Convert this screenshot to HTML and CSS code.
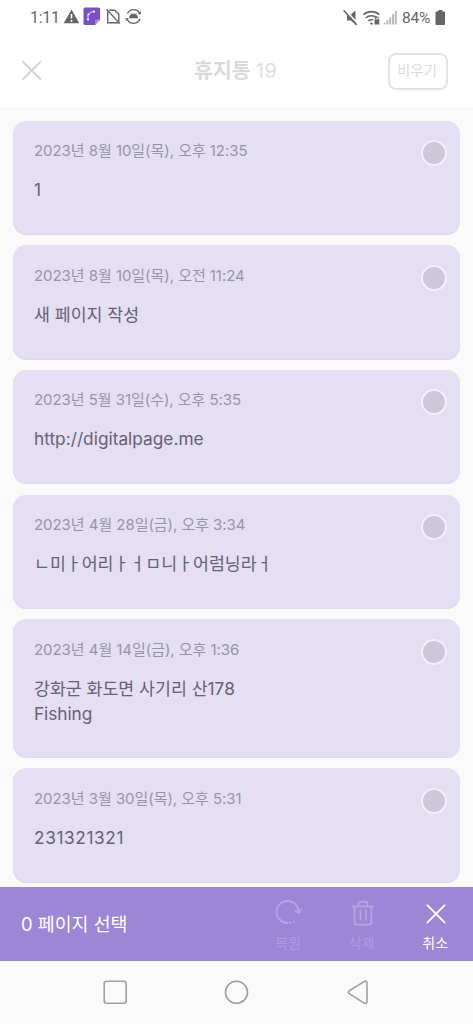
FILE: index.html
```html
<!DOCTYPE html>
<html lang="ko">
<head>
<meta charset="utf-8">
<meta name="viewport" content="width=device-width, initial-scale=1">
<title>휴지통</title>
<link rel="stylesheet" href="styles.css">
</head>
<body>
<div class="screen">
  <div class="status">
    <span class="clock">1:11</span>
    <svg class="status-left" width="80" height="20" viewBox="0 0 80 20">
      <path d="M8.5 2.600 16.300 16.200H.7Z" fill="#666"/>
      <path d="M8.500 7v4.600M8.500 13v1.700" stroke="#fff" stroke-width="1.600"/>
      <path d="M22 .5h13.600a1.500 1.500 0 0 1 1.500 1.500v10.500L32 17.900H22A1.500 1.500 0 0 1 20.500 16.400V2A1.500 1.500 0 0 1 22 .5Z" fill="#7851c3"/>
      <path d="M32 17.900v-3.900a1.500 1.500 0 0 1 1.500-1.500h3.600Z" fill="#a88bdd"/>
      <path d="M25 13V8.500L27 5.500l4-1" fill="none" stroke="#e6dcf6" stroke-width="1"/>
      <circle cx="25" cy="12.500" r="1.100" fill="#fff"/><circle cx="25.500" cy="7.500" r="1.100" fill="#fff"/><circle cx="31" cy="4.600" r="1.100" fill="#fff"/>
      <path d="M46.500 3.200h5.200l4.100 4.200v8.300H44.700V4.500M43.600 2.200 56.800 16.600" fill="none" stroke="#666" stroke-width="1.400"/>
      <path d="M64.400 6.500A7 7 0 0 1 76.500 5.800M77 11.800A7 7 0 0 1 64.200 12.500" fill="none" stroke="#666" stroke-width="1.400"/>
      <path d="M77.900 4v3.200h-3.200ZM62.800 14.200v-3.300h3.300Z" fill="#666"/>
      <path d="M66.500 11a4.100 4 0 0 1 8.200 0ZM67.600 6.200l1.200 1.600M73.600 6.200l-1.200 1.600" fill="#666" stroke="#666" stroke-width=".6"/>
    </svg>
    <svg class="status-right" width="60" height="20" viewBox="0 0 60 20">
      <path d="M5 7.600h2.700L13.500 2.500v14L8.800 12.500H5Z" fill="#666"/>
      <path d="M2.600 1 15.500 15.700" stroke="#fff" stroke-width="1.800"/>
      <path d="M1.600 2.300 14.900 16.900" stroke="#666" stroke-width="1.500"/>
      <path d="M21.400 6.700a12 12 0 0 1 16 0M23.700 10a8.500 8.500 0 0 1 11.400 0M26.300 13a5 5 0 0 1 4.500-1.100" fill="none" stroke="#666" stroke-width="1.600"/>
      <circle cx="29.500" cy="15.600" r="1.200" fill="#666"/>
      <path d="M32.500 11.300h4.800v5.200h-4.800Z" fill="#666"/>
      <path d="M33.400 11.500v-1.200a1.500 1.500 0 0 1 3 0v1.200" fill="none" stroke="#666" stroke-width="1"/>
      <path d="M42.600 16.500v-2M45.400 16.500v-4.600M48.200 16.500V9.300M51 16.500V6.300M53.800 16.500V3" stroke="#b8b8b8" stroke-width="1.900"/>
    </svg>
    <span class="percent">84%</span>
    <svg class="battery" width="11" height="16" viewBox="0 0 11 16">
      <path d="M3.300 0h4v1.400h1.900a.8.8 0 0 1 .8.800v12a.8.8 0 0 1-.8.800H1.300a.8.8 0 0 1-.8-.8v-12a.8.8 0 0 1 .8-.8h2Z" fill="#666"/>
    </svg>
  </div>
  <header class="header">
    <svg width="20" height="20" viewBox="0 0 20 20"><path d="M1.200 1l17 17M18.200 1l-17 17" stroke="#d2d2d2" stroke-width="1.800" stroke-linecap="round"/></svg>
    <h1 class="title">휴지통 <span class="count">19</span></h1>
    <button class="empty">비우기</button>
  </header>
  <main class="list">
    <article class="card"><div><div class="date">2023년 8월 10일(목), 오후 12:35</div><div class="text">1</div></div><span class="check"></span></article>
    <article class="card"><div><div class="date">2023년 8월 10일(목), 오전 11:24</div><div class="text">새 페이지 작성</div></div><span class="check"></span></article>
    <article class="card"><div><div class="date">2023년 5월 31일(수), 오후 5:35</div><div class="text">http://digitalpage.me</div></div><span class="check"></span></article>
    <article class="card"><div><div class="date">2023년 4월 28일(금), 오후 3:34</div><div class="text">ㄴ미ㅏ어리ㅏㅓㅁ니ㅏ어럼닝라ㅓ</div></div><span class="check"></span></article>
    <article class="card"><div><div class="date">2023년 4월 14일(금), 오후 1:36</div><div class="text">강화군 화도면 사기리 산178<br><span class="latin">Fishing</span></div></div><span class="check"></span></article>
    <article class="card"><div><div class="date">2023년 3월 30일(목), 오후 5:31</div><div class="text number">231321321</div></div><span class="check"></span></article>
  </main>
  <footer class="actions">
    <span class="selected">0 페이지 선택</span>
    <div class="action disabled">
      <svg width="30" height="28" viewBox="0 0 30 28" fill="none" stroke="#b9a2e2" stroke-width="1.800" stroke-linecap="round" stroke-linejoin="round"><path d="M14.600 24A11 11 0 1 1 25.600 13.200M22.200 12l3.700 2 2.500-3.600"/><path d="M17.300 23.900h.1M20.800 22.500h.1" stroke-width="2.200"/></svg>
      <span>복원</span>
    </div>
    <div class="action disabled">
      <svg width="30" height="28" viewBox="0 0 30 28" fill="none" stroke="#b9a2e2" stroke-width="1.900" stroke-linecap="round" stroke-linejoin="round"><path d="M5.500 7.500h20.800M11.500 7V3.700q0-1 1-1h6.800q1 0 1 1V7M7.500 8v14.700q0 3 3 3h10.800q3 0 3-3V8M13.500 11.500v9M18.800 11.500v9"/></svg>
      <span>삭제</span>
    </div>
    <div class="action">
      <svg width="30" height="28" viewBox="0 0 30 28"><path d="M7.500 6.400l17 17M24.500 6.400l-17 17" stroke="#fff" stroke-width="2" stroke-linecap="round"/></svg>
      <span>취소</span>
    </div>
  </footer>
  <nav class="nav">
    <svg width="26" height="26" viewBox="0 0 26 26"><rect x="2.200" y="2.300" width="22" height="22" rx="2.500"/></svg>
    <svg width="26" height="26" viewBox="0 0 26 26"><circle cx="12.500" cy="13.300" r="11"/></svg>
    <svg width="26" height="26" viewBox="0 0 26 26"><path d="M4.300 11.800 18.600 2.900Q22 1 22 4v18.400q0 3-3.400 1.400L4.300 14.600q-1.800-1.400 0-2.800Z"/></svg>
  </nav>
</div>
</body>
</html>
```
FILE: styles.css
```css
* { box-sizing: border-box; }
body {
  margin: 0;
  font-family: Inter, "Noto Sans CJK KR", sans-serif;
  background: #fafafa;
}
svg { display: block; flex: none; }
.screen {
  width: 473px;
  height: 1024px;
  display: flex;
  flex-direction: column;
  overflow: hidden;
}
.status {
  flex: none;
  height: 35px;
  padding: 0 27px 0 30px;
  display: flex;
  align-items: center;
  background: #fff;
  color: #666;
  font: 16px/20px Roboto, sans-serif;
}
.clock { width: 33px; margin-top: 1px; letter-spacing: -.3px; }
.status-left { margin-top: -1px; margin-left: 0; }
.status-right { margin-left: auto; }
.percent { width: 32px; font-size: 15.500px; letter-spacing: -.2px; white-space: nowrap; }
.battery { margin-left: 1px; }
.header {
  flex: none;
  height: 72px;
  padding: 0 25px 0 22px;
  display: grid;
  grid-template-columns: 60px 1fr 60px;
  align-items: center;
  background: #fff;
  color: #dadada;
}
.title { margin: 0; padding-left: 1px; text-align: center; font-size: 20.500px; line-height: 28px; font-weight: 600; white-space: nowrap; }
.count { font-weight: 400; color: #e0e0e0; }
.empty {
  width: 60px;
  height: 37px;
  padding: 0 2px 0 0;
  border: 2px solid #e3e3e3;
  border-radius: 8px;
  background: #fff;
  color: #dcdcdc;
  font: 14.500px/22px Inter, "Noto Sans CJK KR", sans-serif;
}
.list {
  flex: none;
  height: 780.400px;
  padding: 13.500px 13px 0;
  display: flex;
  flex-direction: column;
  gap: 10.300px;
  overflow: hidden;
}
.card {
  flex: none;
  min-height: 114.400px;
  padding: 18.400px 13px 32.500px 21px;
  display: flex;
  justify-content: space-between;
  background: #e4dff3;
  border-radius: 14px;
  box-shadow: inset 0 -1px 1px #dfd9ee, 0 0 1px #e5e2ef;
}
.date { color: #9a94aa; font-size: 15px; line-height: 24px; letter-spacing: -.05px; white-space: nowrap; }
.text { margin-top: 14px; color: #686177; font-size: 17.300px; line-height: 25px; white-space: nowrap; }
.latin { letter-spacing: -.08px; }
.number { letter-spacing: .6px; }
.check {
  width: 26px;
  height: 26px;
  margin-top: 1.200px;
  border: 2px solid #f4f1fa;
  border-radius: 50%;
  background: #cdc8da;
}
.actions {
  flex: none;
  height: 73.300px;
  padding: 0 1px 0 21px;
  display: flex;
  background: #9e86d7;
  color: #fff;
}
.selected { margin-right: auto; font-size: 18.400px; line-height: 74px; white-space: nowrap; }
.action {
  width: 73.500px;
  padding-top: 12px;
  display: flex;
  flex-direction: column;
  align-items: center;
  font-size: 14px;
  line-height: 20px;
}
.action span { margin-top: 6px; }
.disabled span { color: #b299df; }
.nav {
  flex: 1;
  display: flex;
  justify-content: center;
  align-items: center;
  gap: 95.500px;
}
.nav svg { fill: none; stroke: #a0a0a0; stroke-width: 1.600; }
```
